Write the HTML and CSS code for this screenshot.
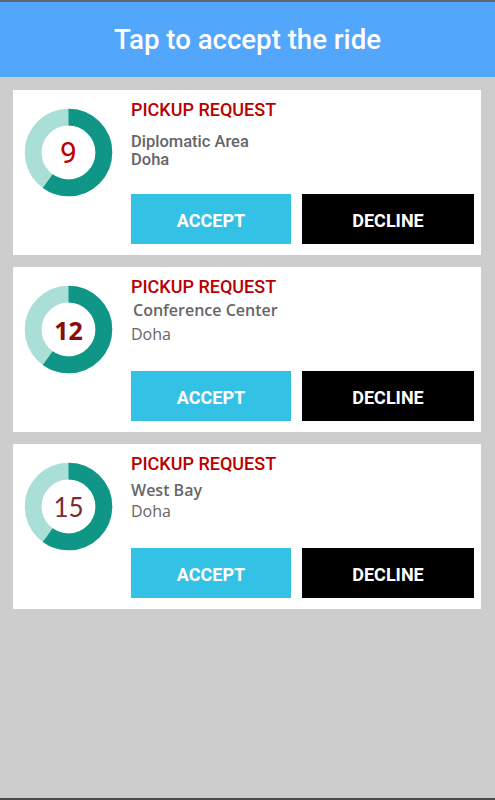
FILE: index.html
```html
<!DOCTYPE html>
<html lang="en">
<head>
<meta charset="utf-8">
<title>Tap to accept the ride</title>
<link rel="stylesheet" href="styles.css">
</head>
<body>
<div class="frame">
  <header class="topbar"><h1 class="topbar__title">Tap to accept the ride</h1></header>
  <main class="list">
    <article class="card">
      <div class="timer">
        <svg class="timer__ring" viewBox="0 0 90 90" width="89" height="89">
          <circle cx="45" cy="45" r="35.75" class="timer__track"/>
          <circle cx="45" cy="45" r="35.75" class="timer__fill" pathLength="100" stroke-dasharray="60 100" transform="rotate(-90 45 45)"/>
        </svg>
        <span class="timer__num timer__num--a">9</span>
      </div>
      <div class="info">
        <h2 class="info__title">PICKUP REQUEST</h2>
        <p class="addr"><span class="addr__street">Diplomatic Area</span><span class="addr__city">Doha</span></p>
        <div class="actions">
          <button class="btn btn--accept">ACCEPT</button>
          <button class="btn btn--decline">DECLINE</button>
        </div>
      </div>
    </article>
    <article class="card">
      <div class="timer">
        <svg class="timer__ring" viewBox="0 0 90 90" width="89" height="89">
          <circle cx="45" cy="45" r="35.75" class="timer__track"/>
          <circle cx="45" cy="45" r="35.75" class="timer__fill" pathLength="100" stroke-dasharray="60 100" transform="rotate(-90 45 45)"/>
        </svg>
        <span class="timer__num timer__num--b">12</span>
      </div>
      <div class="info">
        <h2 class="info__title">PICKUP REQUEST</h2>
        <p class="addr addr--b"><span class="addr__street">Conference Center</span><span class="addr__city">Doha</span></p>
        <div class="actions">
          <button class="btn btn--accept">ACCEPT</button>
          <button class="btn btn--decline">DECLINE</button>
        </div>
      </div>
    </article>
    <article class="card">
      <div class="timer">
        <svg class="timer__ring" viewBox="0 0 90 90" width="89" height="89">
          <circle cx="45" cy="45" r="35.75" class="timer__track"/>
          <circle cx="45" cy="45" r="35.75" class="timer__fill" pathLength="100" stroke-dasharray="60 100" transform="rotate(-90 45 45)"/>
        </svg>
        <span class="timer__num timer__num--c">15</span>
      </div>
      <div class="info">
        <h2 class="info__title">PICKUP REQUEST</h2>
        <p class="addr addr--c"><span class="addr__street">West Bay</span><span class="addr__city">Doha</span></p>
        <div class="actions">
          <button class="btn btn--accept">ACCEPT</button>
          <button class="btn btn--decline">DECLINE</button>
        </div>
      </div>
    </article>
  </main>
</div>
</body>
</html>
```
FILE: styles.css
```css
* { box-sizing: border-box; }
html, body { margin: 0; padding: 0; }
body {
  background: #cdcdcd;
  font-family: Roboto, "Liberation Sans", sans-serif;
}
.frame {
  height: 800px;
  border-top: 2px solid #5d6670;
  border-bottom: 2px solid #4a4a4a;
  background: #cdcdcd;
}
.topbar {
  height: 75px;
  background: #52a6fb;
  display: flex;
  align-items: center;
  justify-content: center;
}
.topbar__title {
  margin: 0;
  color: #fff;
  font-size: 27.6px;
  font-weight: 500;
  line-height: 1;
  padding-top: 1px;
}
.list {
  padding: 13px 14px 0 13px;
  display: flex;
  flex-direction: column;
  gap: 12px;
}
.card {
  background: #fff;
  height: 165px;
  display: flex;
  padding: 0 7px 0 11px;
  gap: 18px;
}
.timer {
  position: relative;
  width: 89px;
  height: 89px;
  margin-top: 18px;
  flex: none;
}
.timer__ring { display: block; }
.timer__track { fill: none; stroke: #aadfd8; stroke-width: 17; }
.timer__fill { fill: none; stroke: #0f9686; stroke-width: 17; }
.timer__num {
  position: absolute;
  inset: 0;
  display: flex;
  align-items: center;
  justify-content: center;
}
.timer__num--a { color: #c00000; font-size: 30px; font-family: Roboto, sans-serif; }
.timer__num--b { color: #8b0a0a; font-size: 25px; font-weight: 700; font-family: "Open Sans", sans-serif; }
.timer__num--c { color: #7a2c2c; font-size: 26px; font-family: Lato, "Open Sans", sans-serif; }
.info {
  flex: 1;
  display: flex;
  flex-direction: column;
  padding-top: 9px;
}
.info__title {
  margin: 0;
  color: #b80000;
  font-size: 18px;
  font-weight: 500;
  line-height: 22px;
}
.addr {
  margin: 12px 0 0;
  color: #666;
  font-size: 16.5px;
  font-weight: 500;
  line-height: 18px;
}
.addr__street, .addr__city { display: block; }
.addr--b, .addr--c { font-family: "Open Sans", sans-serif; font-weight: 400; font-size: 16px; }
.addr--b { margin-top: 0; }
.addr--b .addr__street { font-weight: 600; line-height: 24px; padding-left: 2px; }
.addr--b .addr__city { line-height: 24px; }
.addr--c { margin-top: 4px; }
.addr--c .addr__street { font-weight: 600; line-height: 22px; }
.addr--c .addr__city { line-height: 20px; }
.actions {
  margin-top: auto;
  margin-bottom: 11px;
  display: grid;
  grid-template-columns: 160px 172px;
  gap: 11px;
}
.btn {
  height: 50px;
  border: 0;
  border-radius: 0;
  color: #fff;
  font-family: Roboto, sans-serif;
  font-weight: 700;
  font-size: 18px;
  padding: 3px 0 0;
}
.btn--accept { background: #33c1e6; }
.btn--decline { background: #000; }
```
